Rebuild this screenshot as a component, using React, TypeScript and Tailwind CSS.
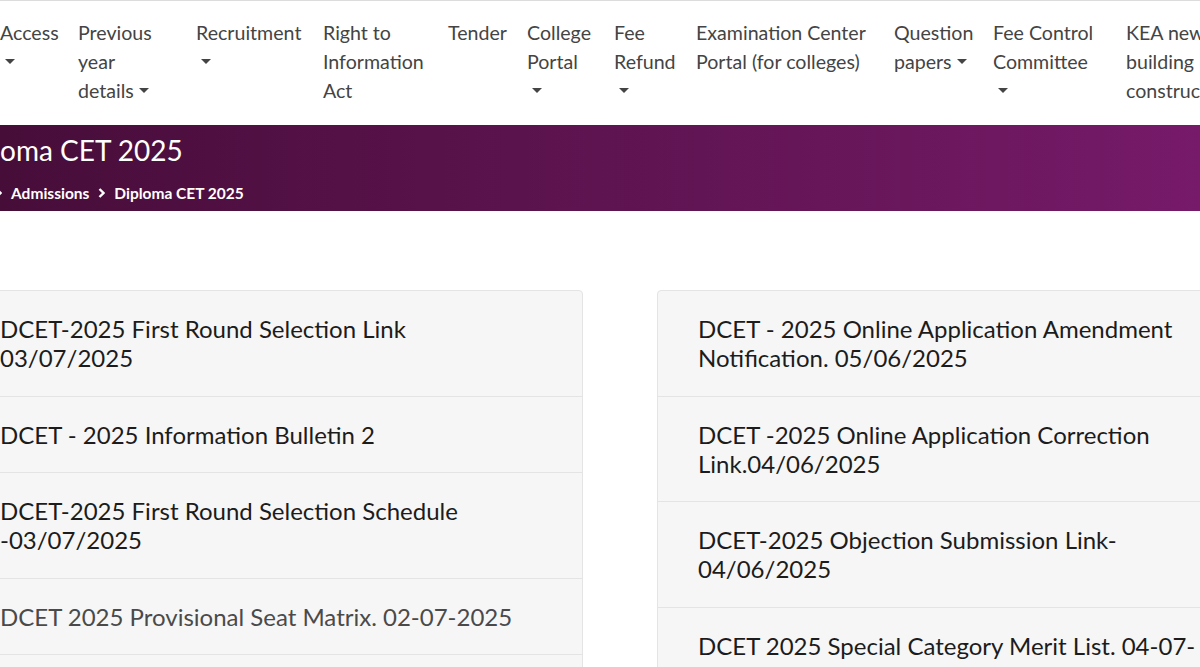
import type { ReactElement } from "react";

type NavItem = { lines: string[]; caret?: "inline" | "below"; width: string };

const NAV: NavItem[] = [
  { lines: ["Access"], caret: "below", width: "w-[78px]" },
  { lines: ["Previous", "year", "details"], caret: "inline", width: "w-[118px]" },
  { lines: ["Recruitment"], caret: "below", width: "w-[127px]" },
  { lines: ["Right to", "Information", "Act"], width: "w-[125px]" },
  { lines: ["Tender"], width: "w-[79px]" },
  { lines: ["College", "Portal"], caret: "below", width: "w-[87px]" },
  { lines: ["Fee", "Refund"], caret: "below", width: "w-[82px]" },
  { lines: ["Examination Center", "Portal (for colleges)"], width: "w-[198px]" },
  { lines: ["Question", "papers"], caret: "inline", width: "w-[99px]" },
  { lines: ["Fee Control", "Committee"], caret: "below", width: "w-[133px]" },
  { lines: ["KEA new", "building", "construction"], width: "w-[160px]" },
];

type Row = { lines: string[]; muted?: boolean };

const LEFT: Row[] = [
  { lines: ["DCET-2025 First Round Selection Link", "03/07/2025"] },
  { lines: ["DCET - 2025 Information Bulletin 2"] },
  { lines: ["DCET-2025 First Round Selection Schedule", "-03/07/2025"] },
  { lines: ["DCET 2025 Provisional Seat Matrix. 02-07-2025"], muted: true },
  { lines: ["DCET 2025 Provisional Merit List. 02-07-2025"] },
];

const RIGHT: Row[] = [
  { lines: ["DCET - 2025 Online Application Amendment", "Notification. 05/06/2025"] },
  { lines: ["DCET -2025 Online Application Correction", "Link.04/06/2025"] },
  { lines: ["DCET-2025 Objection Submission Link-", "04/06/2025"] },
  { lines: ["DCET 2025 Special Category Merit List. 04-07-", "2025"] },
];

function Caret(): ReactElement {
  return (
    <span className="ml-[0.255em] inline-block border-x-[0.3em] border-t-[0.3em] border-b-0 border-x-transparent border-t-current align-[0.255em]" />
  );
}

function Chevron(): ReactElement {
  return (
    <svg width="7" height="10" viewBox="0 0 7 10" className="shrink-0">
      <polyline points="1.5,1 5.5,5 1.5,9" fill="none" stroke="white" strokeWidth="2.4" />
    </svg>
  );
}

function NoticeCard({ rows }: { rows: Row[] }): ReactElement {
  return (
    <div className="w-[624px] shrink-0 overflow-hidden rounded-[4px] border border-[#e4e4e4] bg-[#f6f6f6]">
      {rows.map((row, i) => (
        <div
          key={i}
          className={`border-b border-[#e4e4e4] px-[40px] py-[23.25px] text-[24px] leading-[29px] whitespace-nowrap ${
            row.muted ? "text-[#4a4a4a]" : "text-[#1c1c1c]"
          }`}
        >
          {row.lines.map((line, j) => (
            <div key={j}>{line}</div>
          ))}
        </div>
      ))}
    </div>
  );
}

export default function App(): ReactElement {
  return (
    <div className="h-[667px] w-full overflow-hidden bg-white font-['Lato','Noto_Sans',sans-serif]">
      <nav className="flex h-[125px] items-start border-t border-[#dcdcdc] pt-[17px] text-[19.6px] leading-[29px] text-[#444]">
        {NAV.map((item) => (
          <div key={item.lines[0]} className={`${item.width} shrink-0 whitespace-nowrap`}>
            {item.lines.map((line, i) => (
              <div key={i}>
                {line}
                {item.caret === "inline" && i === item.lines.length - 1 ? <Caret /> : null}
              </div>
            ))}
            {item.caret === "below" ? (
              <div>
                <Caret />
              </div>
            ) : null}
          </div>
        ))}
      </nav>

      <header className="h-[86px] bg-gradient-to-r from-[#470d39] via-[#5e1450] to-[#761a69] pt-[7px]">
        <h1 className="ml-[-50px] text-[28px] leading-[36px] whitespace-nowrap text-white">Diploma CET 2025</h1>
        <div className="mt-[15px] ml-[-5px] flex items-center gap-[9px] text-[15.5px] leading-[20px] font-bold text-white">
          <Chevron />
          <span>Admissions</span>
          <Chevron />
          <span>Diploma CET 2025</span>
        </div>
      </header>

      <main className="mt-[79px] ml-[-41px] flex items-start gap-[74px]">
        <NoticeCard rows={LEFT} />
        <NoticeCard rows={RIGHT} />
      </main>
    </div>
  );
}
